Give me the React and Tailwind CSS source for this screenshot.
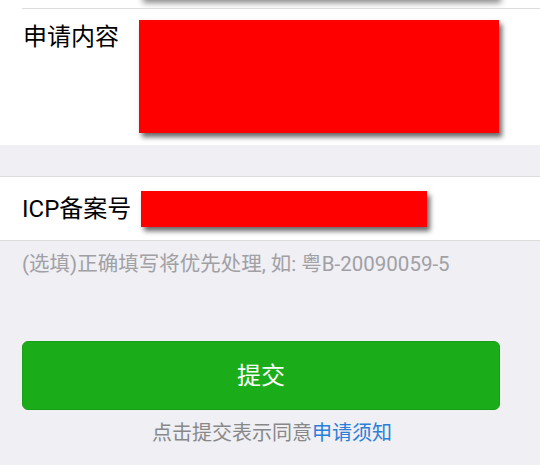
export default function App() {
  return (
    <div
      className="w-[540px] h-[465px] overflow-hidden bg-[#efeff4]"
      style={{ fontFamily: "Roboto, 'Noto Sans CJK SC', sans-serif" }}
    >
      {/* first group */}
      <div className="bg-white">
        <div className="h-[8px] overflow-hidden">
          <div className="ml-[140px] mt-[-30px] w-[358px] h-[30px] shadow-[3px_3px_6px_rgba(0,0,0,0.45)] bg-white" />
        </div>
        <div className="ml-[22px] border-t border-[#dcdcdc]" />
        <div className="flex items-start pl-[23px] pt-[11px] pb-[12px]">
          <div className="w-[116px] pt-[3px] text-[24px] leading-[28px] text-black">申请内容</div>
          <div className="w-[360px] h-[113px] bg-[#ff0000] shadow-[3px_4px_5px_rgba(0,0,0,0.6)]" />
        </div>
      </div>

      <div className="h-[31px]" />

      {/* second group */}
      <div className="bg-white border-t border-b border-[#dcdcdc] h-[65px] flex items-center">
        <div className="pl-[22px] w-[141px] text-[24px] leading-[28px] text-black">ICP备案号</div>
        <div className="w-[286px] h-[36px] bg-[#ff0000] shadow-[3px_4px_5px_rgba(0,0,0,0.6)]" />
      </div>

      <div className="pl-[22px] pt-[9px] text-[20.5px] leading-[28px] text-[#a0a0a5] whitespace-nowrap">
        (选填)正确填写将优先处理, 如: 粤B-20090059-5
      </div>

      <div className="w-[522px] pl-[22px] pt-[63px]">
        <button className="w-[478px] h-[69px] rounded-[6px] bg-[#1aad19] border border-[#179e16] text-white text-[24px]">
          提交
        </button>
        <div className="mt-[10px] text-center text-[20px] leading-[26px] text-[#888888]">
          点击提交表示同意<span className="text-[#2a7fd9]">申请须知</span>
        </div>
      </div>
    </div>
  );
}
